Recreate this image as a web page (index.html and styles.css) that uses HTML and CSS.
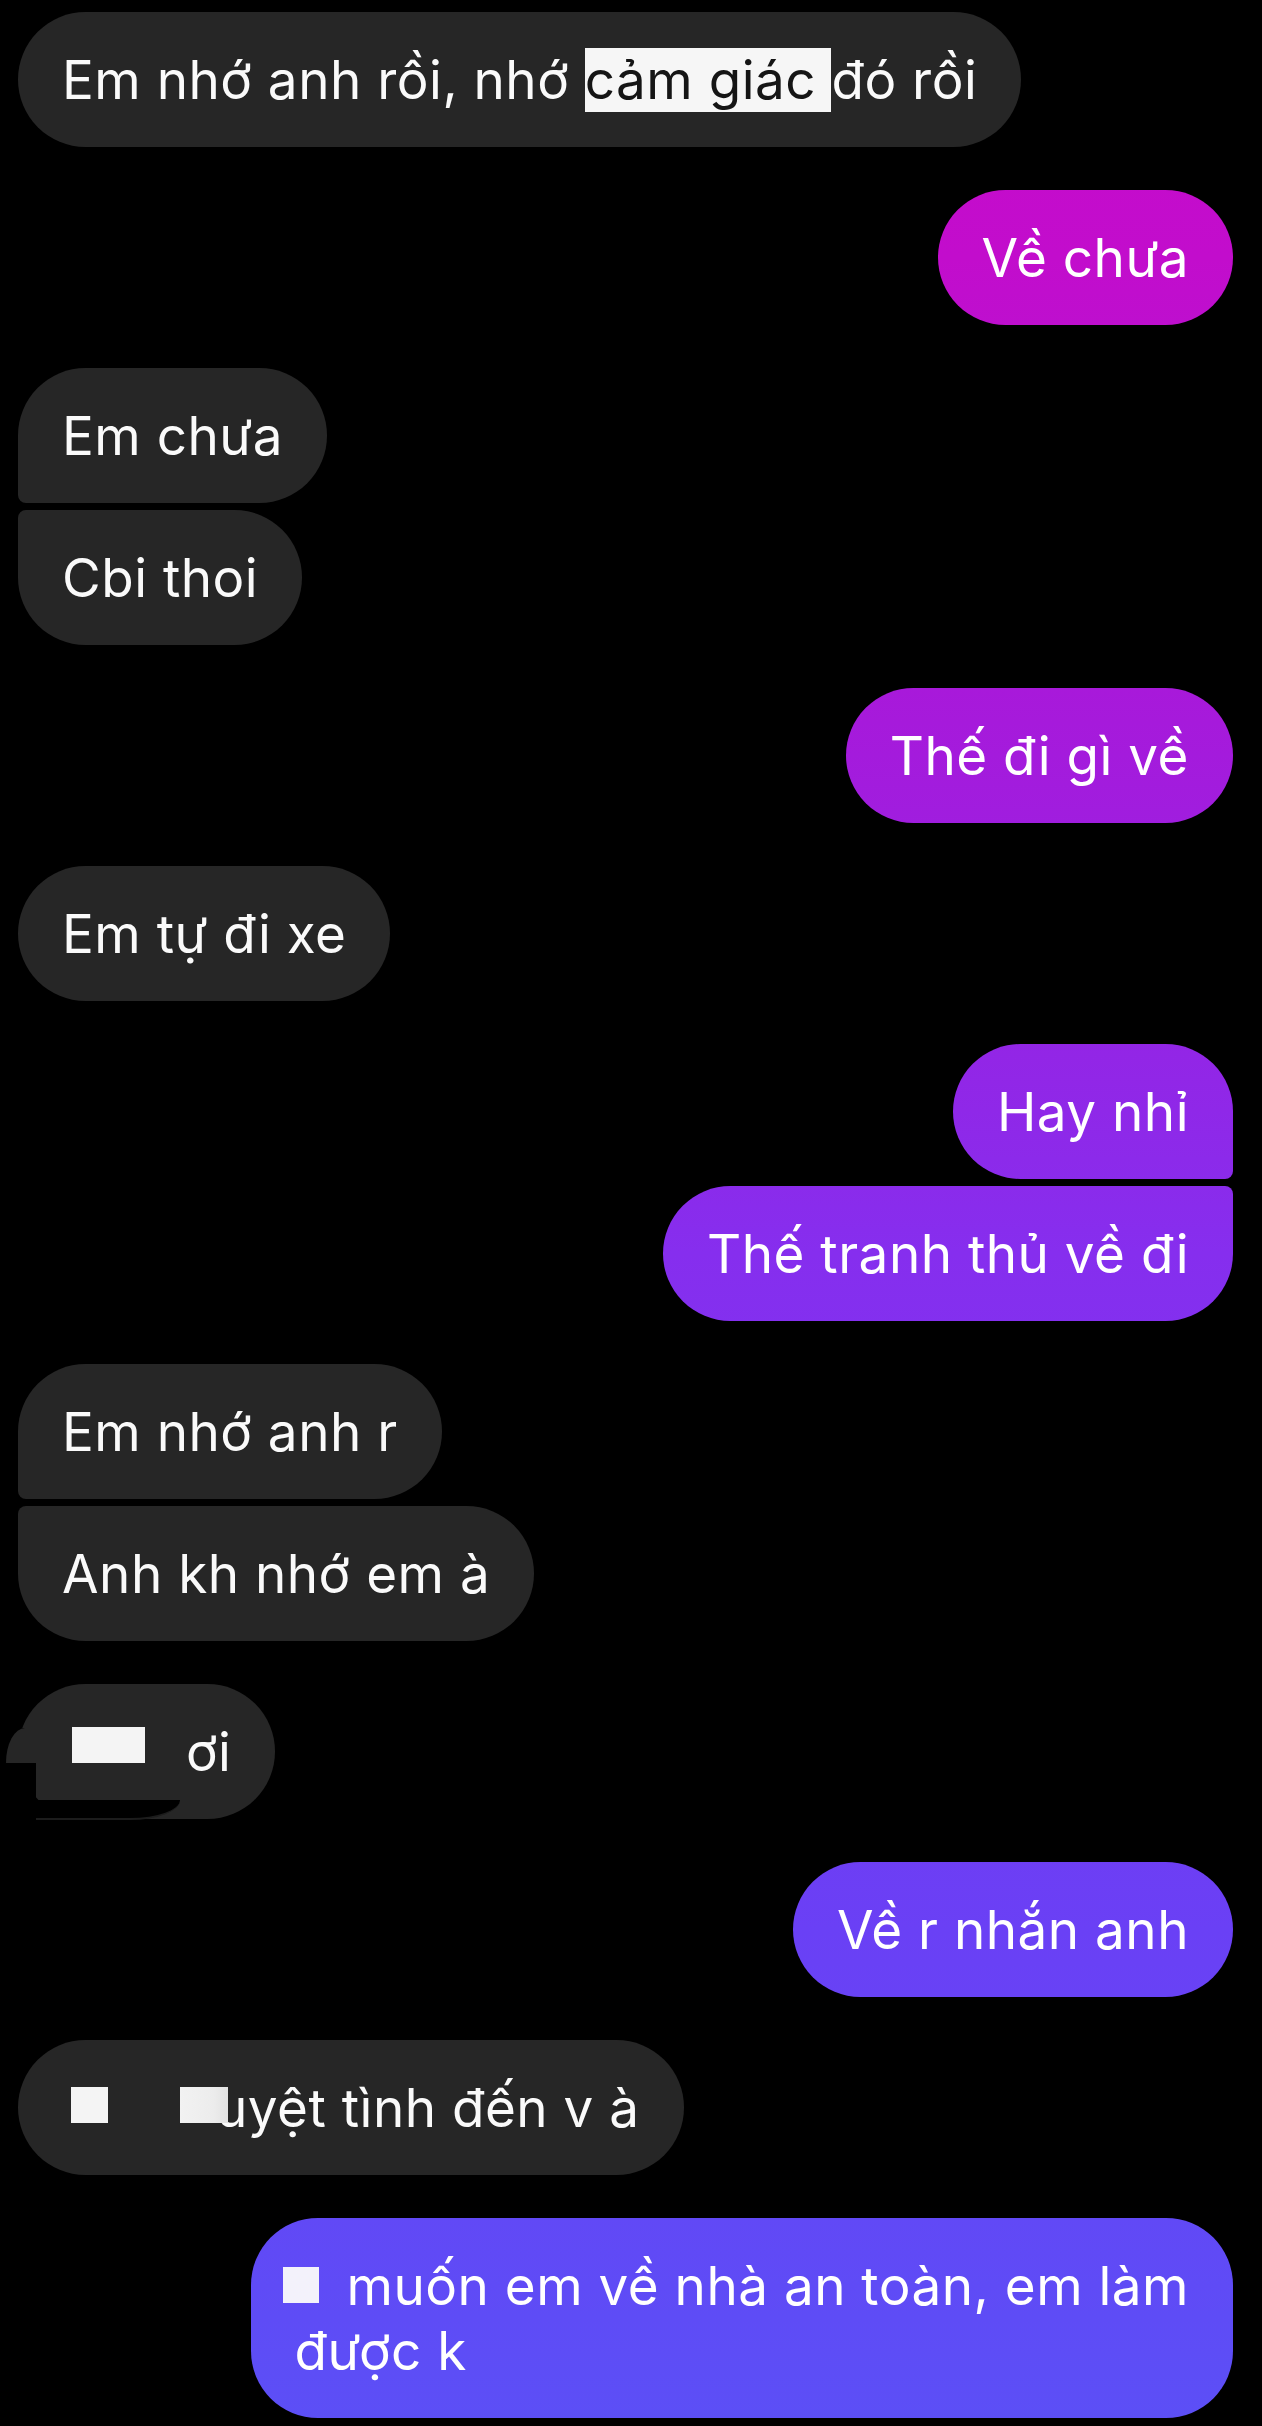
FILE: index.html
```html
<!DOCTYPE html>
<html lang="vi">
<head>
<meta charset="utf-8">
<title>Chat</title>
<link rel="stylesheet" href="styles.css">
</head>
<body>
<main class="chat">
  <div class="group in">
    <div class="bubble">Em nhớ anh rồi, nhớ <span class="sel">cảm giác </span>đó rồi</div>
  </div>
  <div class="group out">
    <div class="bubble">Về chưa</div>
  </div>
  <div class="group in">
    <div class="bubble">Em chưa</div>
    <div class="bubble">Cbi thoi</div>
  </div>
  <div class="group out">
    <div class="bubble">Thế đi gì về</div>
  </div>
  <div class="group in">
    <div class="bubble">Em tự đi xe</div>
  </div>
  <div class="group out">
    <div class="bubble">Hay nhỉ</div>
    <div class="bubble">Thế tranh thủ về đi</div>
  </div>
  <div class="group in">
    <div class="bubble">Em nhớ anh r</div>
    <div class="bubble">Anh kh nhớ em à</div>
  </div>
  <div class="group in">
    <div class="bubble patched"><span class="redact redact-a"></span>ơi<span class="cover-left"></span><span class="patch-arc"></span><span class="cover-bottom"></span></div>
  </div>
  <div class="group out">
    <div class="bubble">Về r nhắn anh</div>
  </div>
  <div class="group in">
    <div class="bubble"><span class="redact redact-b"></span><span class="redact redact-c"></span>uyệt tình đến v à</div>
  </div>
  <div class="group out">
    <div class="bubble multi"><span class="redact redact-d"></span>muốn em về nhà an toàn, em làm<br>được k</div>
  </div>
</main>
</body>
</html>
```

FILE: styles.css
```css
* {
  box-sizing: border-box;
}

html,
body {
  margin: 0;
  background: #000;
}

body {
  font-family: Inter, Roboto, "Noto Sans", "DejaVu Sans", sans-serif;
  color: #fafafa;
}

.chat {
  display: flex;
  flex-direction: column;
  gap: 43px;
  padding: 12px 29px 0 18px;
}

.group {
  display: flex;
  flex-direction: column;
  gap: 7px;
}

.group.in {
  align-items: flex-start;
}

.group.out {
  align-items: flex-end;
}

.bubble {
  position: relative;
  font-size: 53px;
  line-height: 65px;
  letter-spacing: 0.5px;
  padding: 36px 44px 34px 44px;
  border-radius: 67.5px;
  white-space: nowrap;
}

.in .bubble {
  background: #262626;
}

.out .bubble {
  color: #fff;
  background-image: linear-gradient(180deg,
      #c80acb 0px,
      #c20dcc 258px,
      #a41bdc 755px,
      #8f28e8 1111px,
      #862eee 1253px,
      #6a40f5 1930px,
      #5e4cf6 2318px,
      #5c4ff6 2426px);
  background-attachment: fixed;
}

.in .bubble:first-child:not(:last-child) {
  border-bottom-left-radius: 8px;
}

.in .bubble:last-child:not(:first-child) {
  border-top-left-radius: 8px;
}

.out .bubble:first-child:not(:last-child) {
  border-bottom-right-radius: 8px;
}

.out .bubble:last-child:not(:first-child) {
  border-top-right-radius: 8px;
}

.sel {
  background: #f6f6f6;
  color: #151515;
}

.redact {
  display: inline-block;
  position: relative;
  z-index: 1;
  height: 36px;
  background: #f4f4f4;
}

.redact-a {
  width: 73px;
  margin-left: 10px;
  margin-right: 41px;
  vertical-align: 8px;
}

.redact-b {
  width: 37px;
  margin-left: 9px;
  margin-right: 72px;
  vertical-align: 4px;
}

.redact-c {
  width: 48px;
  margin-right: -12px;
  vertical-align: 4px;
  background: linear-gradient(90deg, #f2f2f2, #ececec 70%, #e2e2e2);
}

.redact-d {
  width: 36px;
  margin-left: -12px;
  margin-right: 28px;
  vertical-align: 2px;
  background: #f3f2fb;
}

.bubble.multi {
  border-radius: 67px;
}

/* pasted-over redaction artifacts on the "ơi" bubble */
.cover-left {
  position: absolute;
  left: -18px;
  top: 44px;
  width: 36px;
  height: 72px;
  background: #000;
}

.patch-arc {
  position: absolute;
  left: -12px;
  top: 44px;
  width: 30px;
  height: 35px;
  background: #262626;
  border-top-left-radius: 19px 35px;
}

.cover-bottom {
  position: absolute;
  left: 18px;
  top: 116px;
  width: 144px;
  height: 20px;
  background: #000;
  border-bottom-right-radius: 50px 20px;
  border-bottom: 2px solid #1c1c1c;
}
```
